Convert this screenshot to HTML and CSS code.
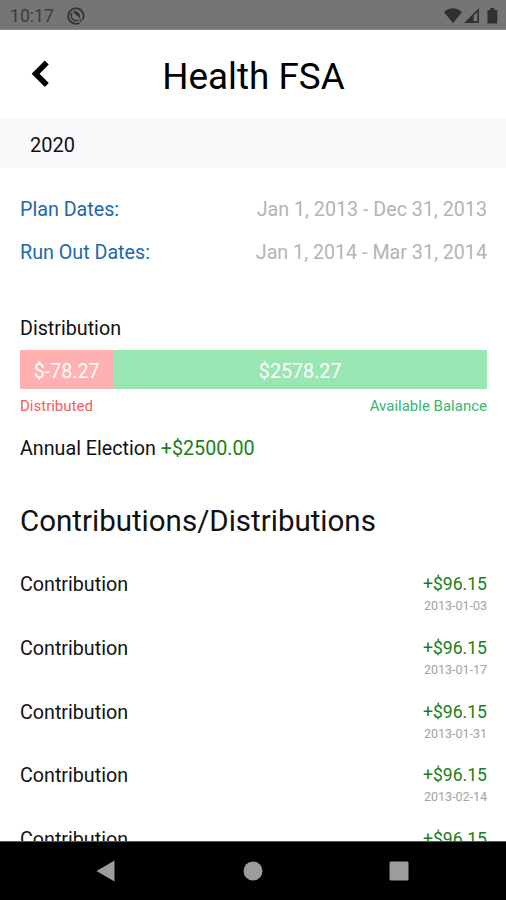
FILE: index.html
```html
<!DOCTYPE html>
<html lang="en">
<head>
    <meta charset="UTF-8">
    <meta name="viewport" content="width=device-width, initial-scale=1">
    <title>Health FSA</title>
    <link rel="stylesheet" href="styles.css">
</head>
<body>
<div class="app">
    <div class="status-bar">
        <span class="clock">10:17</span>
        <svg class="status-app" width="18" height="18" viewBox="0 0 18 18" fill="none" stroke="#343434">
            <path d="M15.6 12.8A7.7 7.7 0 1 0 12.4 15.9" stroke-width="1.8"/>
            <path d="M5 6A5 5 0 0 0 11.4 13.2" stroke-width="1.4"/>
            <path d="M5.8 4.8C9 3 13.6 5 13.2 11.4Z" fill="#343434" stroke="none"/>
            <path d="M12.6 12.6l2 2" stroke-width="1.4"/>
        </svg>
        <svg class="status-icons" width="54" height="18" viewBox="0 0 54 18" fill="#303030">
            <path d="M0 5.2C5-.1 13-.1 18 5.2L9 16Z"/>
            <path d="M35 1v15H20Z"/>
            <path d="M33.4 5v9.3h-3.8V8.8Z" fill="#757575"/>
            <path d="M43.5 3h2.7V1h4.4v2h2.7v13.5h-9.8Z"/>
        </svg>
    </div>

    <div class="header">
        <svg class="back" width="18" height="28" viewBox="0 0 18 28" fill="none" stroke="#000" stroke-width="5.6">
            <path d="M15.8 2.6L4.6 13.8l11.2 11.2"/>
        </svg>
        <h1 class="title">Health FSA</h1>
    </div>

    <div class="year">2020</div>

    <div class="content">
        <div class="date-row">
            <span class="date-label">Plan Dates:</span>
            <span class="date-value">Jan 1, 2013 - Dec 31, 2013</span>
        </div>
        <div class="date-row">
            <span class="date-label">Run Out Dates:</span>
            <span class="date-value">Jan 1, 2014 - Mar 31, 2014</span>
        </div>

        <div class="distribution">
            <div class="distribution-title">Distribution</div>
            <div class="bar">
                <div class="bar-distributed" style="width: 20%">$-78.27</div>
                <div class="bar-available">$2578.27</div>
            </div>
            <div class="bar-legend">
                <span class="legend-distributed">Distributed</span>
                <span class="legend-available">Available Balance</span>
            </div>
        </div>

        <div class="election">Annual Election <span class="amount">+$2500.00</span></div>

        <h2 class="section-title">Contributions/Distributions</h2>

        <div class="entry">
            <span class="entry-type">Contribution</span>
            <div class="entry-info">
                <span class="amount">+$96.15</span>
                <span class="entry-date">2013-01-03</span>
            </div>
        </div>
        <div class="entry">
            <span class="entry-type">Contribution</span>
            <div class="entry-info">
                <span class="amount">+$96.15</span>
                <span class="entry-date">2013-01-17</span>
            </div>
        </div>
        <div class="entry">
            <span class="entry-type">Contribution</span>
            <div class="entry-info">
                <span class="amount">+$96.15</span>
                <span class="entry-date">2013-01-31</span>
            </div>
        </div>
        <div class="entry">
            <span class="entry-type">Contribution</span>
            <div class="entry-info">
                <span class="amount">+$96.15</span>
                <span class="entry-date">2013-02-14</span>
            </div>
        </div>
        <div class="entry">
            <span class="entry-type">Contribution</span>
            <div class="entry-info">
                <span class="amount">+$96.15</span>
            </div>
        </div>
    </div>

    <div class="nav-bar">
        <svg width="20" height="22" viewBox="0 0 20 22" fill="#9c9c9c"><path d="M18.5.5v21L.5 11Z"/></svg>
        <svg width="20" height="20" viewBox="0 0 20 20" fill="#9c9c9c"><circle cx="10" cy="10" r="9.5"/></svg>
        <svg width="20" height="20" viewBox="0 0 20 20" fill="#9c9c9c"><rect x=".5" y=".5" width="19" height="19" rx="1.5"/></svg>
    </div>
</div>
</body>
</html>
```
FILE: styles.css
```css
* {
    box-sizing: border-box;
}

html, body {
    height: 100%;
    margin: 0;
    overflow: hidden;
}

.app {
    display: flex;
    flex-direction: column;
    height: 900px;
    background: #fff;
    color: #111;
    font-family: Roboto, sans-serif;
    font-size: 19.7px;
    line-height: 24px;
}

.status-bar {
    display: flex;
    flex: none;
    align-items: center;
    height: 30px;
    padding: 2px 8px 0 10px;
    background: #757575;
    border-bottom: 1px solid #8c8c8c;
}

.clock {
    width: 57px;
    color: #3c3c3c;
    font-size: 17.6px;
}

.status-icons {
    margin-left: auto;
}

.header {
    display: flex;
    flex: none;
    align-items: center;
    height: 88px;
    padding: 0 31px;
}

.title {
    flex: 1;
    margin: 5px 17px 0 0;
    color: #000;
    font-size: 36.8px;
    font-weight: 400;
    line-height: 44px;
    text-align: center;
}

.year {
    flex: none;
    height: 50px;
    padding: 15px 30px;
    background: #f8f9fb;
    font-size: 20px;
}

.content {
    flex: 1;
    min-height: 0;
    padding: 30px 19px 0 20px;
    overflow: hidden;
}

.date-row {
    display: flex;
    justify-content: space-between;
    margin-bottom: 19px;
}

.date-label {
    color: #1c68ae;
}

.date-value {
    color: #b2b4b6;
}

.distribution {
    margin-top: 52px;
}

.bar {
    display: flex;
    height: 39px;
    margin-top: 9px;
    color: #fff;
    line-height: 43px;
    text-align: center;
}

.bar-distributed {
    background: #ffb0b0;
}

.bar-available {
    flex: 1;
    background: #99e6b3;
}

.bar-legend {
    display: flex;
    justify-content: space-between;
    margin-top: 8px;
    font-size: 15px;
    line-height: 18px;
}

.legend-distributed {
    color: #f25c5c;
}

.legend-available {
    color: #3cb371;
}

.election {
    margin-top: 22px;
}

.amount {
    color: #1a7f1a;
}

.section-title {
    margin: 42px 0 34px;
    font-size: 29.5px;
    font-weight: 400;
    line-height: 36px;
}

.entry {
    display: flex;
    justify-content: space-between;
    height: 63.8px;
}

.entry-info {
    display: flex;
    flex-direction: column;
    align-items: flex-end;
}

.entry-info .amount {
    font-size: 17.6px;
    line-height: 22px;
}

.entry-date {
    margin-top: 3px;
    color: #a2a2a2;
    font-size: 12.5px;
    line-height: 16px;
}

.nav-bar {
    display: flex;
    flex: none;
    align-items: center;
    justify-content: space-between;
    height: 59px;
    padding: 0 97px 0 96px;
    background: #000;
    border-top: 1px solid #555;
}
```
